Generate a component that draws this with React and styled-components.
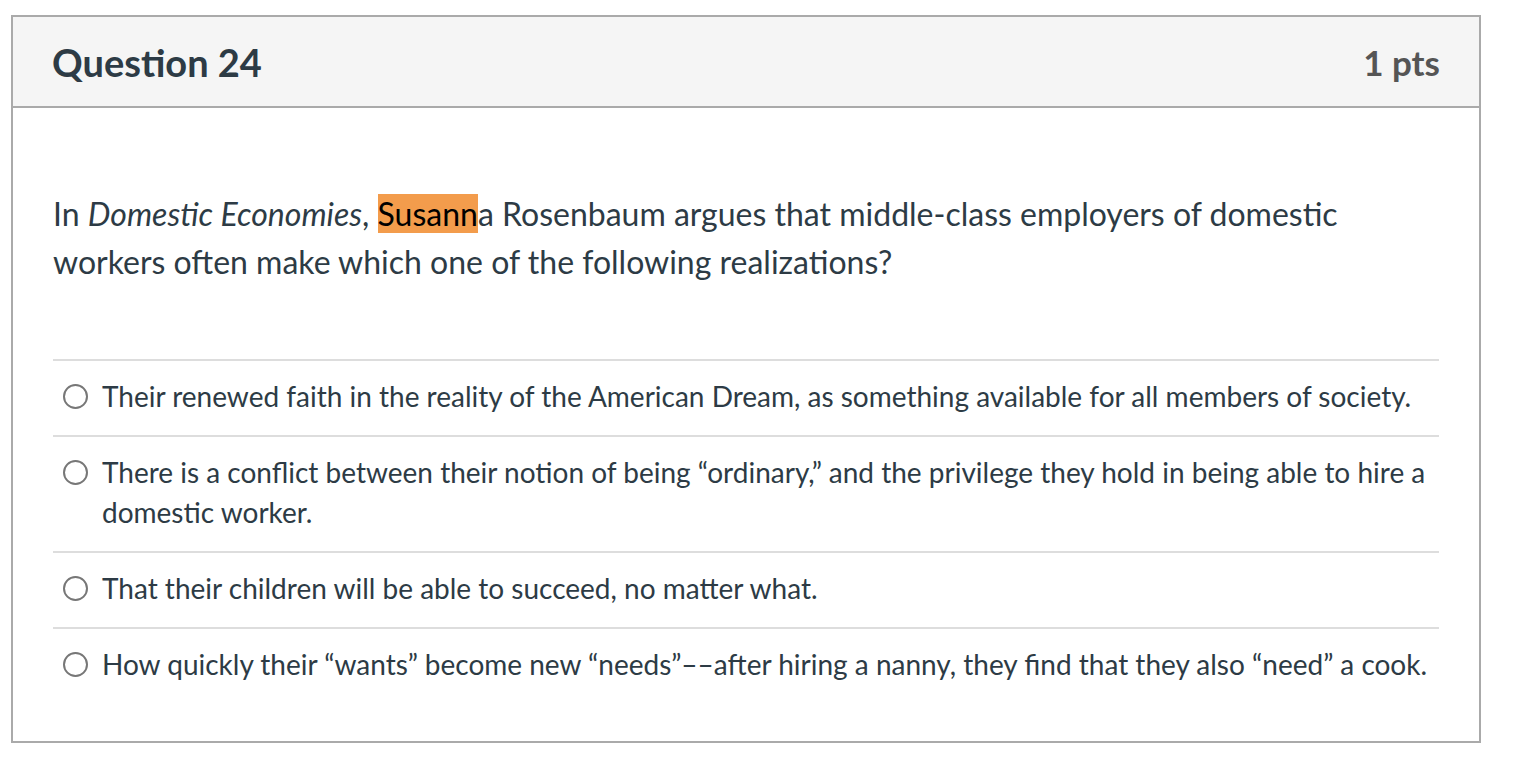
import React from "react";
import styled, { createGlobalStyle } from "styled-components";

const GlobalStyle = createGlobalStyle`
  html, body {
    margin: 0;
    padding: 0;
    background: #ffffff;
  }
  body {
    font-family: Lato, "Open Sans", "Liberation Sans", sans-serif;
    color: #2d3b45;
  }
`;

const Page = styled.div`
  padding: 15px 0 0 11px;
`;

const QuestionCard = styled.div`
  width: 1466px;
  border: 2px solid #aaaaaa;
  background: #ffffff;
`;

const Header = styled.div`
  display: flex;
  align-items: center;
  justify-content: space-between;
  height: 89px;
  padding: 0 39px;
  background: #f5f5f5;
  border-bottom: 2px solid #aaaaaa;
`;

const Title = styled.h2`
  margin: 0;
  font-size: 38px;
  font-weight: 700;
  color: #2d3b45;
`;

const Points = styled.div`
  font-size: 35px;
  font-weight: 700;
  color: #555555;
`;

const Body = styled.div`
  padding: 82px 40px 38px;
`;

const Prompt = styled.p`
  margin: 0 0 73px;
  font-size: 32px;
  line-height: 48px;
  color: #2d3b45;
`;

const Highlight = styled.span`
  background: #f39c4c;
  color: #000000;
`;

const Answers = styled.div`
  display: flex;
  flex-direction: column;
`;

const Answer = styled.label`
  display: flex;
  align-items: flex-start;
  gap: 14px;
  padding: 15px 0 19px 10px;
  border-top: 2px solid #dddddd;
  font-size: 28px;
  line-height: 40px;
  color: #2d3b45;
  cursor: pointer;
`;

const Radio = styled.span`
  flex: none;
  box-sizing: border-box;
  width: 25px;
  height: 25px;
  margin-top: 8px;
  border: 2px solid #777777;
  border-radius: 50%;
  background: #ffffff;
`;

const answers = [
  "Their renewed faith in the reality of the American Dream, as something available for all members of society.",
  "There is a conflict between their notion of being \u201cordinary,\u201d and the privilege they hold in being able to hire a domestic worker.",
  "That their children will be able to succeed, no matter what.",
  "How quickly their \u201cwants\u201d become new \u201cneeds\u201d\u2013\u2013after hiring a nanny, they find that they also \u201cneed\u201d a cook.",
];

export default function App() {
  return (
    <>
      <GlobalStyle />
      <Page>
        <QuestionCard>
          <Header>
            <Title>Question 24</Title>
            <Points>1 pts</Points>
          </Header>
          <Body>
            <Prompt>
              In <em>Domestic Economies</em>, <Highlight>Susann</Highlight>a
              Rosenbaum argues that middle-class employers of domestic workers
              often make which one of the following realizations?
            </Prompt>
            <Answers>
              {answers.map((text, i) => (
                <Answer key={i}>
                  <Radio />
                  <span>{text}</span>
                </Answer>
              ))}
            </Answers>
          </Body>
        </QuestionCard>
      </Page>
    </>
  );
}
